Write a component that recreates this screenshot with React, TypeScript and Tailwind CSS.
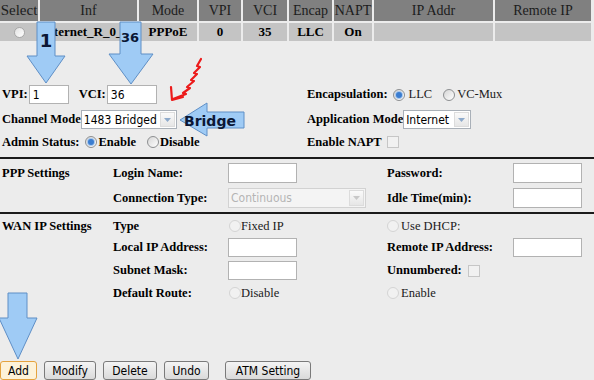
import * as React from "react";

const lbl = "font-bold text-[12.5px] whitespace-nowrap";
const txt = "text-[12.5px] whitespace-nowrap text-[#1a1a1a]";
const sans = "font-['DejaVu_Sans_Condensed','Liberation_Sans',sans-serif]";
const cell = "flex items-center";

const Radio: React.FC<{ checked?: boolean; disabled?: boolean }> = ({ checked, disabled }) => {
  if (disabled) {
    return <span className="inline-block w-[12px] h-[12px] shrink-0 rounded-full border border-[#d4d4d4] bg-[#f1f1f1]" />;
  }
  return (
    <span className="inline-flex w-[12px] h-[12px] shrink-0 items-center justify-center rounded-full border border-[#8d8f91] bg-linear-to-br from-[#d6d6d6] to-white">
      {checked && <span className="w-[6px] h-[6px] rounded-full bg-[#3b7dd0] ring-1 ring-[#a8c7ec]" />}
    </span>
  );
};

const Check: React.FC = () => (
  <span className="block w-[12px] h-[12px] shrink-0 border border-[#c6c6c6] bg-[#f1f1f1]" />
);

const Field: React.FC<{ value?: string; className: string }> = ({ value = "", className }) => (
  <input
    readOnly
    value={value}
    className={`block bg-white border border-[#b2b2b2] px-[3px] text-[12px] text-black outline-none ${sans} ${className}`}
  />
);

const Select: React.FC<{ value: string; className: string; disabled?: boolean }> = ({ value, className, disabled }) => (
  <div
    className={`flex shrink-0 border ${disabled ? "border-[#d2d2d2] bg-[#f4f4f4] text-[#b4b4b4]" : "border-[#a9b0b8] bg-white text-black"} ${className}`}
  >
    <span className={`flex-1 flex items-center px-[2px] text-[12px] whitespace-nowrap overflow-hidden ${sans}`}>{value}</span>
    <span className="w-[15px] m-[1px] flex items-center justify-center border border-[#dcdcdc] bg-linear-to-b from-[#fafafa] to-[#e6e6e6]">
      <svg width="7" height="4" viewBox="0 0 7 4">
        <path d="M0 0h7L3.5 4z" fill={disabled ? "#c8c8c8" : "#8eaacb"} />
      </svg>
    </span>
  </div>
);

const Btn: React.FC<{ label: string; className: string; active?: boolean }> = ({ label, className, active }) => (
  <button
    className={`h-[19px] flex items-center justify-center rounded-[3px] border text-[12px] text-black ${sans} ${
      active ? "border-[#e5a33f] bg-[#fdf2d9]" : "border-[#7a7a7a] bg-linear-to-b from-[#f4f4f4] to-[#dadada]"
    } ${className}`}
  >
    {label}
  </button>
);

const headers = ["Select", "Inf", "Mode", "VPI", "VCI", "Encap", "NAPT", "IP Addr", "Remote IP"];
const row = ["Internet_R_0_35", "PPPoE", "0", "35", "LLC", "On", "", ""];

export default function App() {
  return (
    <div className="relative w-[594px] h-[380px] overflow-hidden bg-[#ececec] text-black font-['Liberation_Serif','Times_New_Roman',serif]">
      {/* connection table */}
      <div className="grid grid-cols-[38px_97px_58px_42px_44px_43px_38px_119px_96px] gap-[2px]">
        {headers.map((h, i) => (
          <div
            key={h}
            className={`h-[21px] flex items-center justify-center bg-[#808080] text-[#1c1c1c] whitespace-nowrap ${i === 0 ? "text-[15px]" : "text-[14px]"}`}
          >
            {h}
          </div>
        ))}
        <div className="h-[18px] flex items-center justify-center bg-[#c4c4c4]">
          <span className="w-[11px] h-[11px] rounded-full border border-[#a8a8a8] bg-linear-to-br from-[#e2e2e2] to-white" />
        </div>
        {row.map((c, i) => (
          <div key={i} className="h-[18px] flex items-center justify-center bg-[#c4c4c4] font-bold text-[13px] whitespace-nowrap">
            {c}
          </div>
        ))}
      </div>

      {/* channel settings */}
      <div className="mt-[44px] pl-[2px] flex h-[19px] items-center">
        <div className="w-[305px] flex items-center">
          <span className={lbl}>VPI:</span>
          <Field value="1" className="ml-[1px] w-[40px] h-[19px]" />
          <span className={`${lbl} ml-[10px]`}>VCI:</span>
          <Field value="36" className="ml-[1px] w-[50px] h-[19px]" />
        </div>
        <div className="flex items-center">
          <span className={lbl}>Encapsulation:</span>
          <span className="ml-[5px] flex"><Radio checked /></span>
          <span className={`${txt} ml-[4px]`}>LLC</span>
          <span className="ml-[11px] flex"><Radio /></span>
          <span className={`${txt} ml-[2px]`}>VC-Mux</span>
        </div>
      </div>

      <div className="mt-[6px] pl-[2px] flex h-[19px] items-center">
        <div className="w-[305px] flex items-center">
          <span className={lbl}>Channel Mode</span>
          <Select value="1483 Bridged" className="w-[96px] h-[19px]" />
        </div>
        <div className="flex items-center">
          <span className={lbl}>Application Mode</span>
          <Select value="Internet" className="w-[68px] h-[19px]" />
        </div>
      </div>

      <div className="mt-[5px] pl-[2px] flex h-[16px] items-center">
        <div className="w-[305px] flex items-center">
          <span className={lbl}>Admin Status:</span>
          <span className="ml-[6px] flex"><Radio checked /></span>
          <span className={`${lbl} ml-[1px]`}>Enable</span>
          <span className="ml-[11px] flex"><Radio /></span>
          <span className={`${lbl} ml-[1px]`}>Disable</span>
        </div>
        <div className="flex items-center">
          <span className={lbl}>Enable NAPT</span>
          <span className="ml-[5px]"><Check /></span>
        </div>
      </div>

      <div className="mt-[7px] h-[2px] bg-[#1b1b1b]" />

      {/* PPP settings */}
      <div className="mt-[4px] pl-[2px] grid grid-cols-[111px_115px_159px_126px_auto] grid-rows-[20px_20px] gap-y-[5px]">
        <div className={`${lbl} ${cell}`}>PPP Settings</div>
        <div className={`${lbl} ${cell}`}>Login Name:</div>
        <div className={cell}><Field className="w-[69px] h-[20px]" /></div>
        <div className={`${lbl} ${cell}`}>Password:</div>
        <div className={cell}><Field className="w-[69px] h-[20px]" /></div>

        <div />
        <div className={`${lbl} ${cell}`}>Connection Type:</div>
        <div className={cell}><Select disabled value="Continuous" className="w-[138px] h-[20px]" /></div>
        <div className={`${lbl} ${cell}`}>Idle Time(min):</div>
        <div className={cell}><Field className="w-[69px] h-[20px]" /></div>
      </div>

      <div className="mt-[4px] h-[2px] bg-[#1b1b1b]" />

      {/* WAN IP settings */}
      <div className="mt-[4px] pl-[2px] grid grid-cols-[111px_115px_159px_126px_auto] grid-rows-[16px_19px_19px_18px] gap-y-[4px]">
        <div className={`${lbl} ${cell}`}>WAN IP Settings</div>
        <div className={`${lbl} ${cell}`}>Type</div>
        <div className={`${cell} pl-[1px]`}>
          <Radio disabled />
          <span className={txt}>Fixed IP</span>
        </div>
        <div className={cell}>
          <Radio disabled />
          <span className={`${txt} ml-[2px]`}>Use DHCP:</span>
        </div>
        <div />

        <div />
        <div className={`${lbl} ${cell}`}>Local IP Address:</div>
        <div className={cell}><Field className="w-[69px] h-[19px]" /></div>
        <div className={`${lbl} ${cell}`}>Remote IP Address:</div>
        <div className={cell}><Field className="w-[69px] h-[19px]" /></div>

        <div />
        <div className={`${lbl} ${cell}`}>Subnet Mask:</div>
        <div className={cell}><Field className="w-[69px] h-[19px]" /></div>
        <div className={cell}>
          <span className={lbl}>Unnumbered:</span>
          <span className="ml-[6px]"><Check /></span>
        </div>
        <div />

        <div />
        <div className={`${lbl} ${cell}`}>Default Route:</div>
        <div className={`${cell} pl-[1px]`}>
          <Radio disabled />
          <span className={txt}>Disable</span>
        </div>
        <div className={cell}>
          <Radio disabled />
          <span className={`${txt} ml-[2px]`}>Enable</span>
        </div>
        <div />
      </div>

      {/* buttons */}
      <div className="mt-[59px] flex items-center">
        <Btn label="Add" active className="w-[37px]" />
        <Btn label="Modify" className="ml-[7px] w-[52px]" />
        <Btn label="Delete" className="ml-[7px] w-[54px]" />
        <Btn label="Undo" className="ml-[7px] w-[45px]" />
        <Btn label="ATM Setting" className="ml-[16px] w-[86px]" />
      </div>

      {/* screenshot annotations */}
      <svg className="absolute left-0 top-0 pointer-events-none" width="594" height="380" viewBox="0 0 594 380">
        <g fill="#9fcbf5" stroke="#5f8fc6" strokeWidth="1">
          <polygon points="37,22 55,22 55,56 65,56 46,83 27,56 37,56" />
          <polygon points="120,22 141,22 141,54 153,54 131,84 109,54 120,54" />
          <polygon points="180,120 207,103 207,112 244,112 244,128 207,128 207,136" />
          <polygon points="8,293 27,293 27,318 37,318 18,359 -1,318 8,318" />
        </g>
        <g fill="#0b1735" fontFamily="'DejaVu Sans', sans-serif" fontWeight="bold">
          <text x="46" y="47" fontSize="18" textAnchor="middle">1</text>
          <text x="130" y="42" fontSize="13" textAnchor="middle">36</text>
          <text x="184" y="126" fontSize="14">Bridge</text>
        </g>
        <g fill="none" stroke="#ec1b1b" strokeWidth="2.2" strokeLinecap="round" strokeLinejoin="round">
          <polyline points="201,59 197,66 200,67 194,73 197,74 191,80 194,81 187,87 190,88 183,93 186,94 173,99" />
          <polyline points="171,87 172,100 183,97" />
        </g>
      </svg>
    </div>
  );
}
